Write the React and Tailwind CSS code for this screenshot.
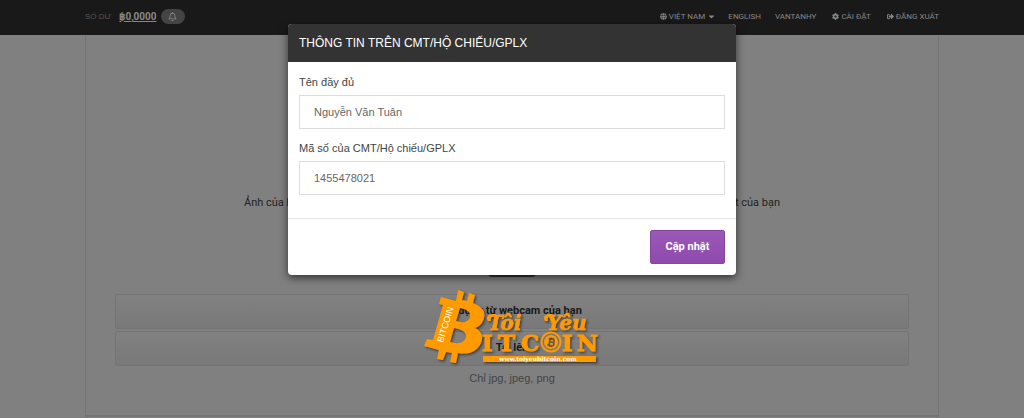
import { FaGlobe, FaCog, FaSignOutAlt, FaCaretDown, FaRegBell } from "react-icons/fa";

function Logo() {
  return (
    <svg
      viewBox="420 286 184 84"
      className="pointer-events-none absolute top-[286px] left-[calc(50%-92px)] z-30 h-[84px] w-[184px]"
      role="img"
      aria-label="Tôi Yêu Bitcoin"
    >
      <defs>
        <filter id="shade" x="-10%" y="-10%" width="125%" height="125%">
          <feDropShadow dx="1.5" dy="1.5" stdDeviation="1" floodColor="#222" floodOpacity="0.7" />
        </filter>
      </defs>
      <g fill="#ff9a05" filter="url(#shade)">
        <path
          fillRule="evenodd"
          d="M441 297 L456 301 L458 290 L464 292 L462 300 L467 301 L469 293 L475 295 L473 303 C481 306 486 311 484 318 C482 325 478 327 475 328 C481 331 484 336 481 343 C477 352 468 355 458 353 L456 363 L450 362 L452 353 L446 352 L443 360 L437 359 L439 350 L424 346 L427 339 L433 340 L443 305 L439 304 Z M460 308 L456 321 C462 323 468 323 470 317 C471 311 466 309 460 308 Z M454 328 L450 342 C457 344 464 344 466 337 C467 331 460 329 454 328 Z"
        />
        <path d="M488 321 C485 316 489 314 496 314 L496 316 C491 316 490 318 491 321 Z M545 321 C542 316 546 314 552 314 L552 316 C548 316 547 318 548 321 Z" />
        <g fontFamily="DejaVu Serif, serif" fontWeight="700" fontStyle="italic" fontSize="20" stroke="#ff9a05" strokeWidth="0.5">
          <text x="488" y="330">Tôi</text>
          <text x="547" y="330">Yêu</text>
        </g>
        <g fontFamily="DejaVu Serif, serif" fontWeight="700" fontSize="23" stroke="#ff9a05" strokeWidth="1">
          <text x="482" y="351">I</text>
          <text x="498" y="351">T</text>
          <text x="521" y="351">C</text>
          <text x="562" y="351">I</text>
          <text x="577" y="351">N</text>
        </g>
        <rect x="483" y="356" width="113" height="6" />
      </g>
      <circle cx="551" cy="342" r="9.5" fill="#777" stroke="#ff9a05" strokeWidth="2" />
      <circle cx="551" cy="342" r="7" fill="#ff9a05" />
      <g fill="none" stroke="#555" strokeWidth="1.5" transform="rotate(12 551 342)">
        <path d="M548 339 H552 C554.5 339 554.5 342 552 342 H549.5 H552.5 C555 342 555 345.500 552.500 345.500 H548 M549.500 339 V345.500 M550.500 337.500 V339 M552.500 337.500 V339 M550.500 345.500 V347 M552.500 345.500 V347" />
      </g>
      <text transform="translate(443 343) rotate(-73)" fill="#fff" fontFamily="Liberation Sans, sans-serif" fontSize="9">BITCOIN</text>
      <text x="538" y="361" textAnchor="middle" fill="#fff" fontFamily="DejaVu Serif, serif" fontWeight="700" fontSize="6">www.toiyeubitcoin.com</text>
    </svg>
  );
}

function Field({ id, label, value }) {
  return (
    <div className="flex flex-col gap-[5px]">
      <label htmlFor={id} className="text-[11px] leading-4 text-[#444]">{label}</label>
      <input
        id={id}
        type="text"
        defaultValue={value}
        className="h-[34px] w-full border border-[#ddd] bg-white px-3.5 text-[11px] text-[#666] outline-none"
      />
    </div>
  );
}

const uploadButton =
  "h-[35px] w-full rounded-xs border border-[#747474] bg-linear-to-b from-[#818181] to-[#797979] font-[Roboto,sans-serif] text-[11px] font-bold text-[#191919]";

export default function App() {
  return (
    <div className="relative min-h-screen overflow-hidden bg-[#808080] font-['Liberation_Sans',Arial,sans-serif]">
      <header className="flex h-[35px] items-center justify-between bg-[#191919] px-[85px] pb-0.5 text-[#888]">
        <div className="flex items-center">
          <span className="mr-2 text-[8px] text-[#555]">SỐ DƯ</span>
          <a href="#balance" className="mr-1 font-[Roboto,sans-serif] text-[10px] font-bold underline">฿0,0000</a>
          <button type="button" aria-label="Thông báo" className="flex h-[15px] w-6 items-center justify-center rounded-full bg-[#444]">
            <FaRegBell size={9} />
          </button>
        </div>
        <nav className="flex items-center font-[Roboto,sans-serif] text-[8px]">
          <a href="#vn" className="mr-3 flex items-center gap-0.5"><FaGlobe size={7} />VIỆT NAM<FaCaretDown size={9} /></a>
          <a href="#en" className="mr-3.5">ENGLISH</a>
          <a href="#user" className="mr-4">VANTANHY</a>
          <a href="#settings" className="mr-4 flex items-center gap-0.5"><FaCog size={7} />CÀI ĐẶT</a>
          <a href="#logout" className="flex items-center gap-0.5"><FaSignOutAlt size={7} />ĐĂNG XUẤT</a>
        </nav>
      </header>

      <main className="mx-[85px] flex flex-col border-x border-b-2 border-[#747474] px-[29px] pt-40 pb-7">
        <p className="mx-auto flex w-[536px] justify-between font-[Roboto,sans-serif] text-[11px] leading-4 text-[#222]">
          <span>Ảnh của bạn</span>
          <span>mặt của bạn</span>
        </p>
        <div className="mx-auto mt-8 h-[34px] w-12 rounded-sm bg-[#333]" />
        <div className="mt-[17px] flex flex-col gap-0.5">
          <button type="button" className={uploadButton}>Sử dụng từ webcam của bạn</button>
          <button type="button" className={uploadButton}>Tải lên</button>
        </div>
        <p className="mt-[3px] text-center text-[11px] leading-[18px] text-[#444]">Chỉ jpg, jpeg, png</p>
      </main>

      <form
        role="dialog"
        aria-labelledby="dialog-title"
        className="absolute top-6 left-1/2 z-20 w-[448px] -translate-x-1/2 overflow-hidden rounded-sm bg-white shadow-[0_3px_9px_rgba(0,0,0,0.6)]"
      >
        <h2 id="dialog-title" className="flex h-[38px] items-center bg-[#333] px-[11px] text-xs text-white">
          THÔNG TIN TRÊN CMT/HỘ CHIẾU/GPLX
        </h2>
        <div className="flex flex-col gap-[11px] px-[11px] pt-3 pb-[23px]">
          <Field id="full-name" label="Tên đầy đủ" value="Nguyễn Văn Tuân" />
          <Field id="id-number" label="Mã số của CMT/Hộ chiếu/GPLX" value="1455478021" />
        </div>
        <div className="flex justify-end border-t border-[#e5e5e5] p-[11px]">
          <button
            type="button"
            className="h-[34px] w-[75px] rounded-xs border border-[#8546a0] bg-linear-to-b from-[#9b59b6] to-[#8e4aad] font-[Roboto,sans-serif] text-[11px] font-bold text-white"
          >
            Cập nhật
          </button>
        </div>
      </form>
      <Logo />
    </div>
  );
}
